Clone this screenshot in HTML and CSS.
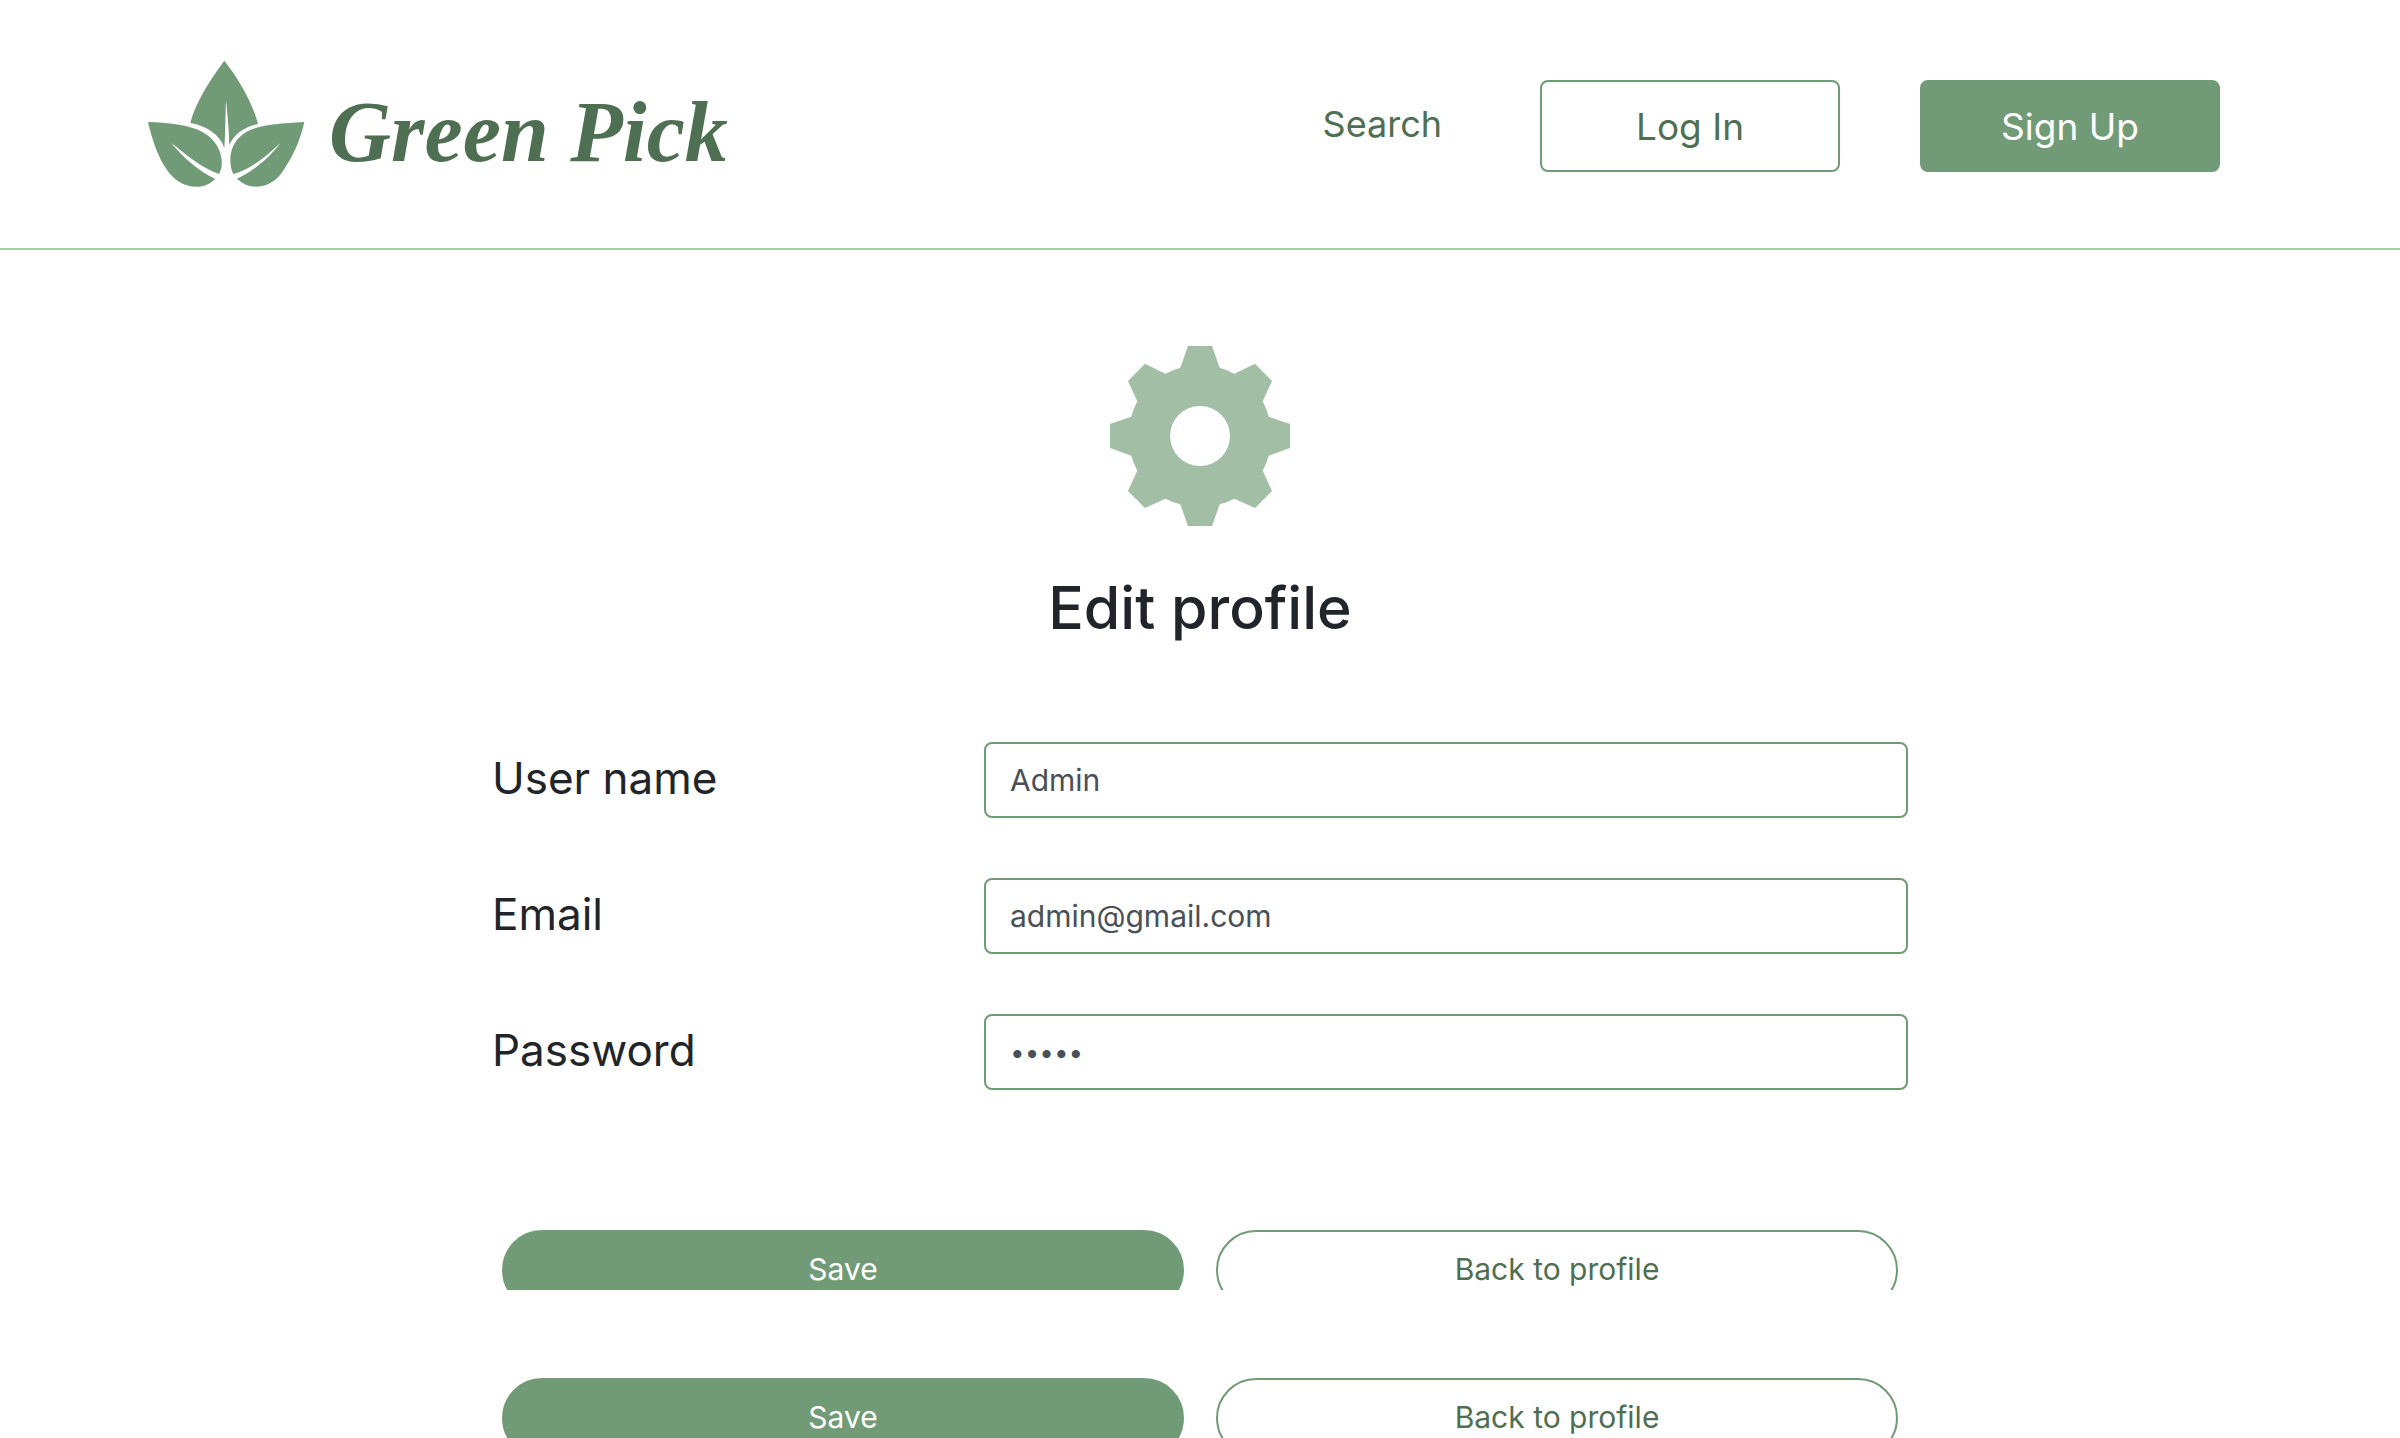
FILE: index.html
```html
<!DOCTYPE html>
<html lang="en">
<head>
<meta charset="utf-8">
<meta name="viewport" content="width=device-width, initial-scale=1">
<title>Green Pick - Edit profile</title>
<link rel="stylesheet" href="styles.css">
</head>
<body>
<header class="header">
  <a class="brand" href="#">
    <svg class="brand-mark" viewBox="80 60 474 384" aria-hidden="true">
      <path d="M312 62C270 118 224 190 210 249C258 258 299 283 312 324C315 280 315 230 317 180C322 230 326 270 327 315C340 283 372 260 413 252C398 190 352 112 312 62Z"/>
      <path d="M83 246C140 248 208 255 245 275C292 300 308 345 304 378C303 388 299 396 296 402C240 382 200 346 153 309C187 350 232 392 284 416C270 432 250 440 228 440C192 440 162 422 140 390C112 350 96 300 83 246Z"/>
      <path d="M552 246C478 250 424 255 390 270C345 290 330 328 330 360C330 378 334 392 339 402C395 386 438 348 480 309C450 350 402 392 350 416C368 432 385 440 408 440C442 440 472 420 490 390C520 345 540 300 552 246Z"/>
    </svg>
    <span class="brand-name">Green Pick</span>
  </a>
  <nav class="nav">
    <a class="nav-link" href="#">Search</a>
    <button class="btn btn-outline" type="button">Log In</button>
    <button class="btn btn-fill" type="button">Sign Up</button>
  </nav>
</header>
<main class="main">
  <svg class="gear" viewBox="90 78 540 540" aria-hidden="true">
    <path fill-rule="evenodd" d="M324 78H396L419 143Q442 150 463 161L525 131L576 183L548 244Q560 266 566 290L630 312V384L566 407Q560 430 548 452L576 513L525 564L463 536Q442 547 419 553L396 618H324L301 553Q278 547 256 536L195 564L144 513L172 452Q160 430 154 407L90 384V312L154 290Q160 266 172 244L144 183L195 131L256 161Q278 150 301 143ZM360 258A90 90 0 1 0 360 438A90 90 0 1 0 360 258Z"/>
  </svg>
  <h1 class="title">Edit profile</h1>
  <form class="form">
    <div class="field">
      <label class="label" for="username">User name</label>
      <input class="input" id="username" type="text" value="Admin">
    </div>
    <div class="field">
      <label class="label" for="email">Email</label>
      <input class="input" id="email" type="email" value="admin@gmail.com">
    </div>
    <div class="field">
      <label class="label" for="password">Password</label>
      <input class="input input-password" id="password" type="password" value="admin">
    </div>
    <div class="actions">
      <button class="pill btn-fill" type="button">Save</button>
      <button class="pill btn-outline" type="button">Back to profile</button>
    </div>
    <div class="actions">
      <button class="pill btn-fill" type="button">Save</button>
      <button class="pill btn-outline" type="button">Back to profile</button>
    </div>
  </form>
</main>
</body>
</html>
```
FILE: styles.css
```css
* {
  box-sizing: border-box;
}

body {
  margin: 0;
  background: #fff;
  color: #212529;
  font-family: Inter, "Liberation Sans", sans-serif;
}

button,
input {
  font-family: inherit;
}

.header {
  display: flex;
  align-items: center;
  justify-content: space-between;
  height: 250px;
  padding: 0 180px 0 147px;
  border-bottom: 2px solid #a8ceaa;
}

.brand {
  display: flex;
  align-items: center;
  gap: 24px;
  text-decoration: none;
}

.brand-mark {
  width: 158px;
  height: 128px;
  fill: #719b76;
}

.brand-name {
  color: #4f6f52;
  font: italic bold 86px/112px "Liberation Serif", serif;
  padding-top: 16px;
  white-space: nowrap;
}

.nav {
  display: flex;
  align-items: center;
  gap: 80px;
  padding-top: 4px;
}

.nav-link {
  padding: 0 18px 4px;
  color: #4f6f52;
  font-size: 36px;
  line-height: 60px;
  text-decoration: none;
}

.btn {
  width: 300px;
  height: 92px;
  border-radius: 8px;
  font-size: 37px;
}

.btn-outline {
  border: 2px solid #719b76;
  background: #fff;
  color: #4f6f52;
}

.btn-fill {
  border: 2px solid #719b76;
  background: #719b76;
  color: #fff;
}

.main {
  display: flex;
  flex-direction: column;
  align-items: center;
  padding-top: 96px;
}

.gear {
  width: 180px;
  height: 180px;
  fill: #a2bea4;
}

.title {
  margin: 44px 0 96px;
  font-size: 59px;
  font-weight: 500;
  line-height: 76px;
}

.form {
  width: 59%;
}

.field {
  display: grid;
  grid-template-columns: 1fr 2fr;
  align-items: center;
  gap: 30px;
  margin-bottom: 60px;
}

.label {
  padding-bottom: 4px;
  font-size: 44px;
  line-height: 72px;
}

.input {
  width: 100%;
  height: 76px;
  padding: 0 24px;
  border: 2px solid #719b76;
  border-radius: 8px;
  background: #fff;
  color: #495057;
  font-size: 30px;
}

.input-password {
  font-size: 26px;
}

.actions {
  display: grid;
  grid-template-columns: 1fr 1fr;
  gap: 32px;
  height: 60px;
  margin-top: 88px;
  padding: 0 10px;
  overflow: hidden;
}

.field + .actions {
  margin-top: 140px;
}

.pill {
  height: 80px;
  padding-bottom: 4px;
  border-radius: 40px;
  font-size: 30px;
}
```
